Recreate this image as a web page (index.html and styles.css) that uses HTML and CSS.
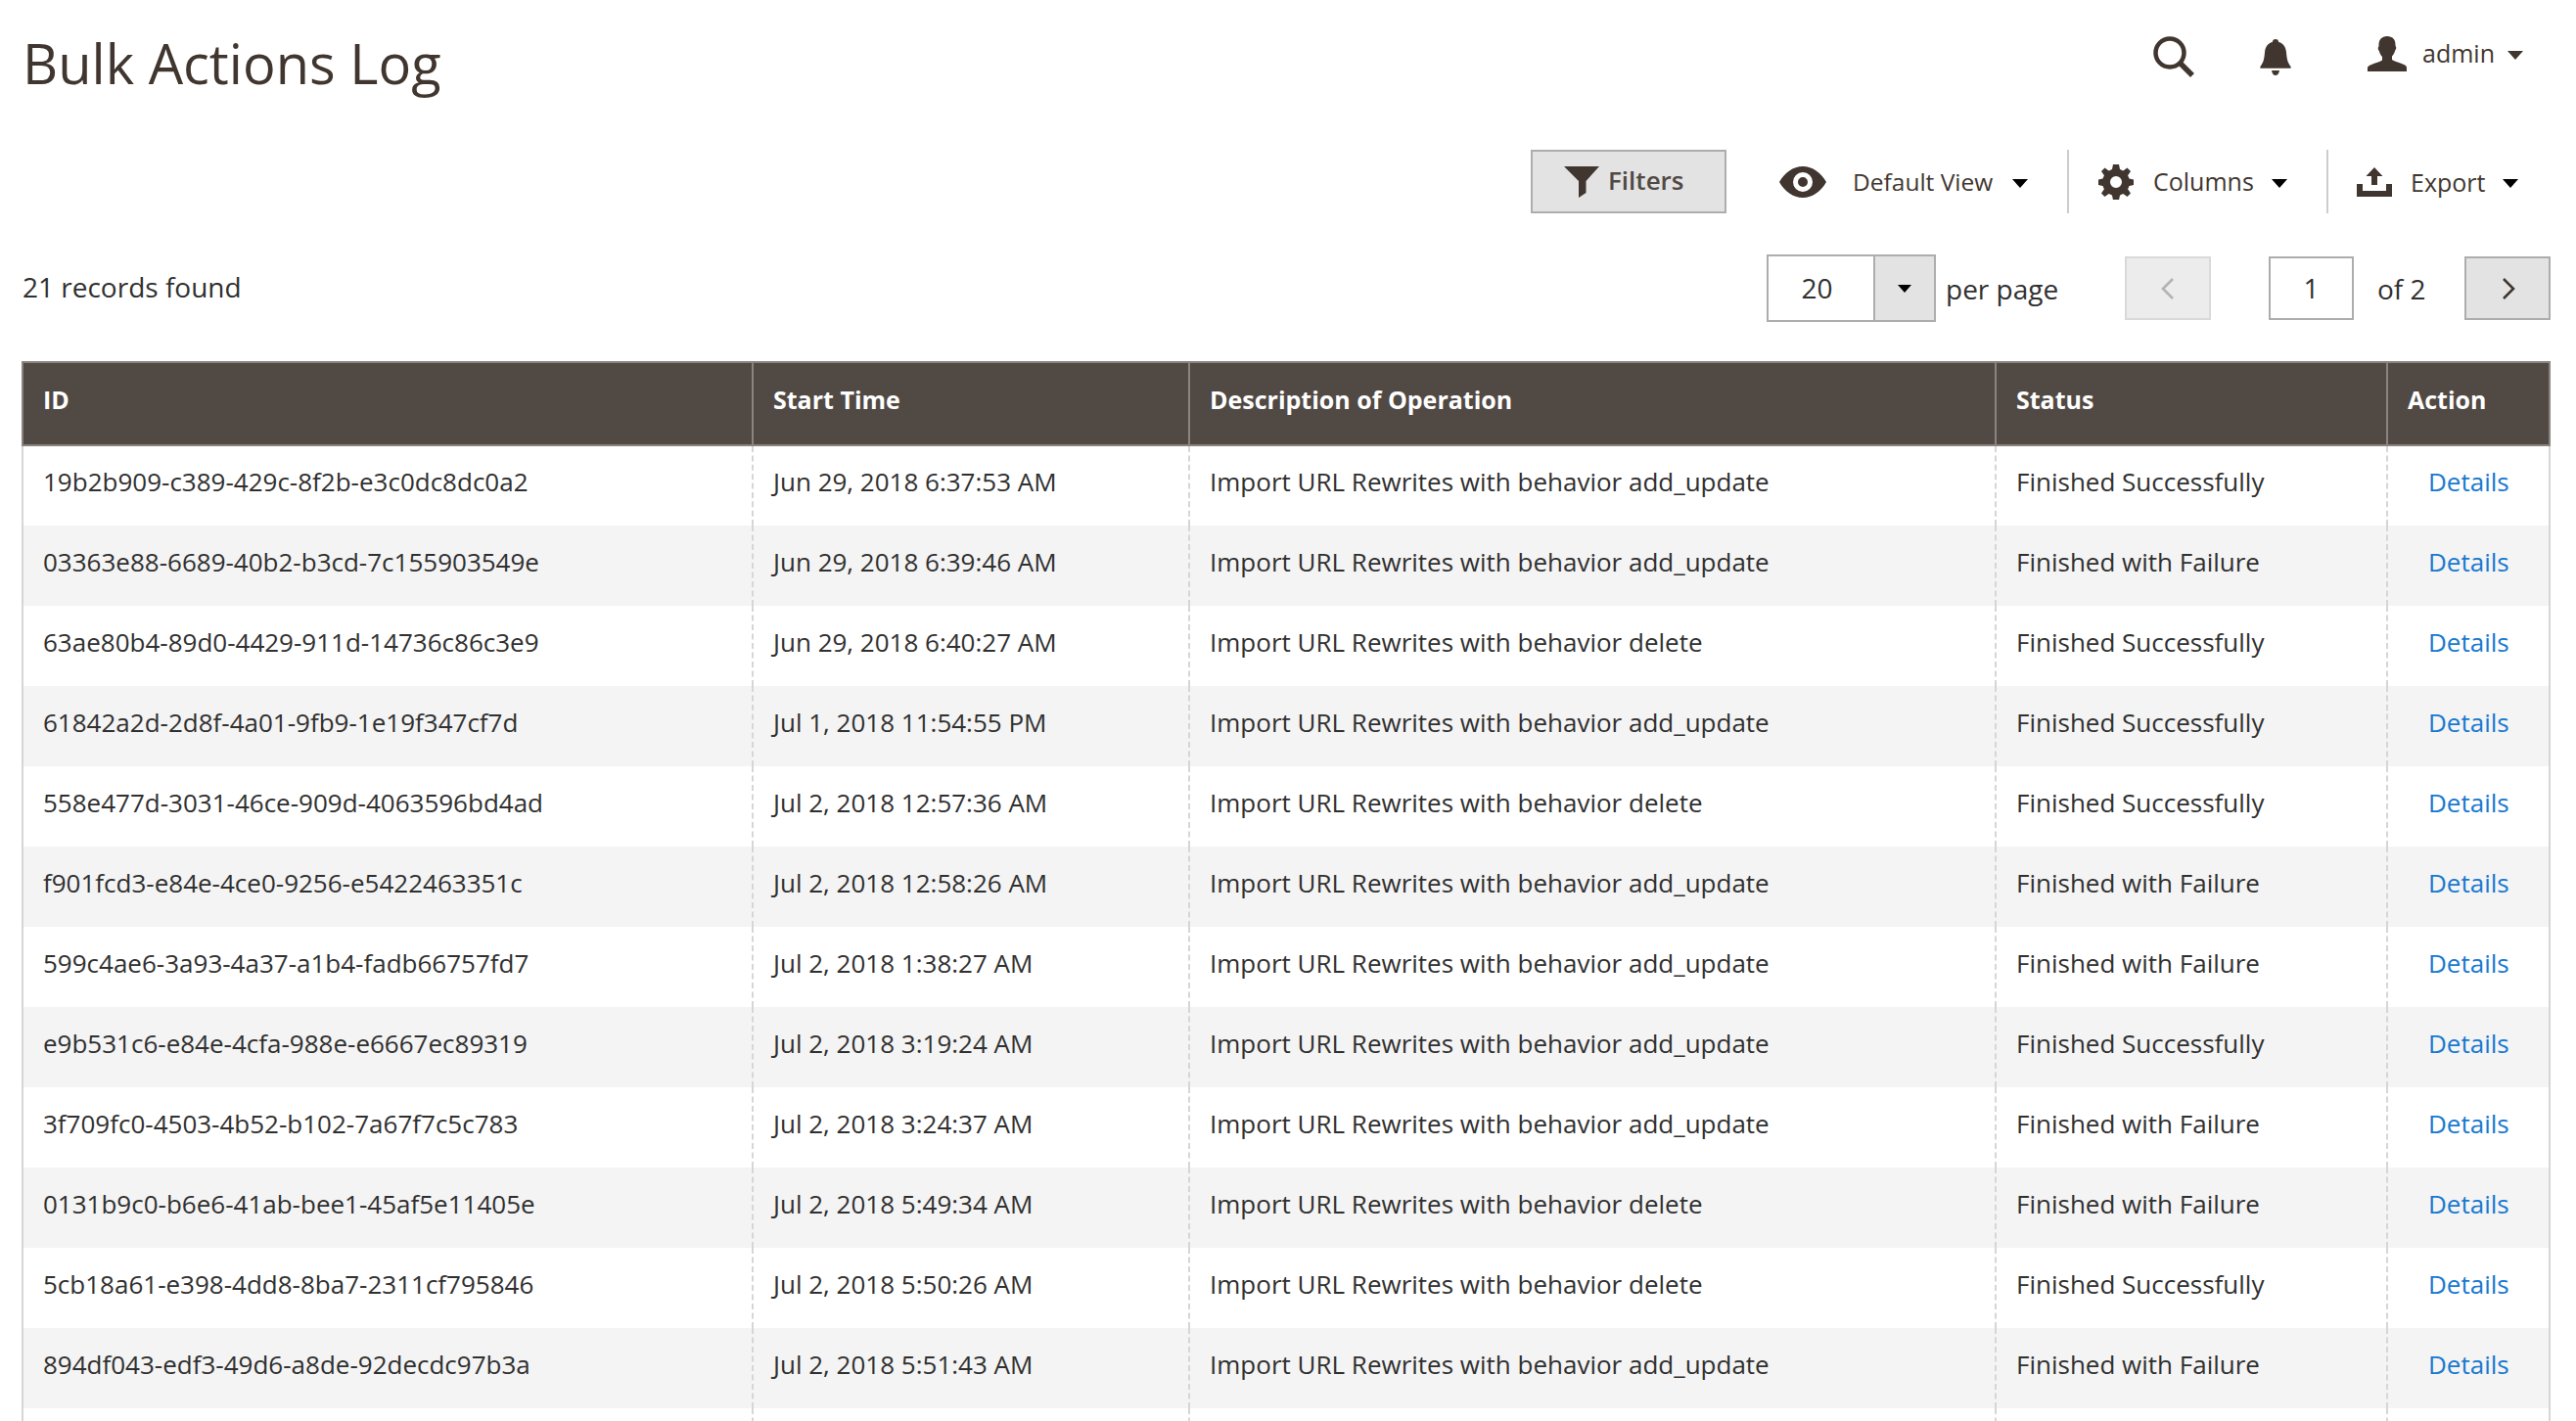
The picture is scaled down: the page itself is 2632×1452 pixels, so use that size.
FILE: index.html
```html
<!DOCTYPE html>
<html lang="en">
<head>
  <meta charset="UTF-8" />
  <title>Bulk Actions Log</title>
  <link rel="stylesheet" href="styles.css">
</head>
<body>

  <header class="top">
    <h1>Bulk Actions Log</h1>
    <div class="top-actions">
      <svg class="ico-search" viewBox="0 0 44 42"><circle cx="18" cy="17" r="14.5" fill="none" stroke="#41362f" stroke-width="4.5"/><path d="M28 27l13 13" stroke="#41362f" stroke-width="5.5" fill="none"/></svg>
      <svg class="ico-bell" viewBox="0 0 32 38"><path fill="#41362f" d="M16 0c2 0 3 1.300 3.200 3 5 1.300 7.300 5.300 7.800 10.500.5 5.500 1 10 4.500 14.500.6.800.2 1.800-.9 1.800H1.400c-1.100 0-1.500-1-.9-1.800C4 23.500 4.500 19 5 13.500 5.500 8.300 7.800 4.300 12.800 3 13 1.300 14 0 16 0zM12 32h8c-.4 3-2 5-4 5s-3.600-2-4-5z"/></svg>
      <svg class="ico-user" viewBox="0 0 40 36"><path fill="#41362f" d="M20 0c5.500 0 8.500 3.500 8.500 8.500 0 1 .1 2 .6 2.500.5.700-.1 2.600-.9 3.500-.7 3-2.200 5-3.200 6v3.500c2.500 1.700 7 2.800 11 4.500 2.500 1 4 1.900 4 3.500V36H0v-3.500c0-1.600 1.500-2.500 4-3.500 4-1.700 8.500-2.800 11-4.500V21c-1-1-2.500-3-3.200-6-.8-.9-1.400-2.800-.9-3.500.5-.5.600-1.500.6-2.500C11.500 3.500 14.500 0 20 0z"/></svg>
      <span class="admin">admin</span>
      <span class="caret caret-brown"></span>
    </div>
  </header>

  <div class="toolbar">
    <button class="btn-filters">
      <svg class="ico-filter" viewBox="0 0 36 32"><path fill="#41362f" d="M0 0h36L22.500 15v12L15 32V15z"/></svg>
      Filters
    </button>
    <div class="tool tool-view">
      <svg class="ico-eye" viewBox="0 0 48 32"><path fill="#41362f" fill-rule="evenodd" d="M24 0c10 0 18.500 6.500 24 16-5.500 9.500-14 16-24 16S5.500 25.500 0 16C5.500 6.500 14 0 24 0zm0 6a10 10 0 1 0 0 20 10 10 0 0 0 0-20zm0 5a5 5 0 1 1 0 10 5 5 0 0 1 0-10z"/></svg>
      <span class="view-label">Default View</span>
      <span class="caret"></span>
    </div>
    <div class="tool tool-columns">
      <svg class="ico-gear" viewBox="0 0 36 36"><path fill="#41362f" fill-rule="evenodd" d="M15 0h6l1 5 3.300 1.400L29.500 3.500l3.500 3.500-2.900 4.200L31.500 14.500l4.500 1v5.500l-4.500 1-1.400 3.300 2.900 4.200-3.500 3.500-4.200-2.900-3.300 1.400-1 5h-6l-1-5-3.300-1.400-4.200 2.900L3 29.500l2.900-4.200L4.500 22 0 21v-5.500l4.500-1 1.400-3.300L3 7l3.500-3.500 4.200 2.900L14 5zm3 12a6 6 0 1 0 0 12 6 6 0 0 0 0-12z"/></svg>
      <span class="columns-label">Columns</span>
      <span class="caret"></span>
    </div>
    <div class="tool tool-export">
      <svg class="ico-export" viewBox="0 0 36 30"><path fill="#41362f" d="M18 0l8.500 9H21v9h-6V9H9.500zM0 17h6v7h24v-7h6v13H0z"/></svg>
      <span class="export-label">Export</span>
      <span class="caret"></span>
    </div>
  </div>

  <div class="pager-row">
    <div class="records">21 records found</div>
    <div class="pager">
      <div class="per-select">
        <span class="per-value">20</span>
        <span class="per-toggle"><span class="caret caret-small"></span></span>
      </div>
      <span class="per-label">per page</span>
      <button class="page-btn page-prev">
        <svg viewBox="0 0 16 26"><path d="M13 3L3 13l10 10" fill="none" stroke="#b3b3b3" stroke-width="2.600"/></svg>
      </button>
      <span class="page-input">1</span>
      <span class="page-of">of 2</span>
      <button class="page-btn page-next">
        <svg viewBox="0 0 16 26"><path d="M3 3l10 10L3 23" fill="none" stroke="#41362f" stroke-width="2.600"/></svg>
      </button>
    </div>
  </div>

  <table class="grid">
    <colgroup>
      <col class="c-id"><col class="c-time"><col class="c-desc"><col class="c-status"><col class="c-action">
    </colgroup>
    <thead>
      <tr><th>ID</th><th>Start Time</th><th>Description of Operation</th><th>Status</th><th>Action</th></tr>
    </thead>
    <tbody>
      <tr><td>19b2b909-c389-429c-8f2b-e3c0dc8dc0a2</td><td>Jun 29, 2018 6:37:53 AM</td><td>Import URL Rewrites with behavior add_update</td><td>Finished Successfully</td><td class="act"><a href="#">Details</a></td></tr>
      <tr><td>03363e88-6689-40b2-b3cd-7c155903549e</td><td>Jun 29, 2018 6:39:46 AM</td><td>Import URL Rewrites with behavior add_update</td><td>Finished with Failure</td><td class="act"><a href="#">Details</a></td></tr>
      <tr><td>63ae80b4-89d0-4429-911d-14736c86c3e9</td><td>Jun 29, 2018 6:40:27 AM</td><td>Import URL Rewrites with behavior delete</td><td>Finished Successfully</td><td class="act"><a href="#">Details</a></td></tr>
      <tr><td>61842a2d-2d8f-4a01-9fb9-1e19f347cf7d</td><td>Jul 1, 2018 11:54:55 PM</td><td>Import URL Rewrites with behavior add_update</td><td>Finished Successfully</td><td class="act"><a href="#">Details</a></td></tr>
      <tr><td>558e477d-3031-46ce-909d-4063596bd4ad</td><td>Jul 2, 2018 12:57:36 AM</td><td>Import URL Rewrites with behavior delete</td><td>Finished Successfully</td><td class="act"><a href="#">Details</a></td></tr>
      <tr><td>f901fcd3-e84e-4ce0-9256-e5422463351c</td><td>Jul 2, 2018 12:58:26 AM</td><td>Import URL Rewrites with behavior add_update</td><td>Finished with Failure</td><td class="act"><a href="#">Details</a></td></tr>
      <tr><td>599c4ae6-3a93-4a37-a1b4-fadb66757fd7</td><td>Jul 2, 2018 1:38:27 AM</td><td>Import URL Rewrites with behavior add_update</td><td>Finished with Failure</td><td class="act"><a href="#">Details</a></td></tr>
      <tr><td>e9b531c6-e84e-4cfa-988e-e6667ec89319</td><td>Jul 2, 2018 3:19:24 AM</td><td>Import URL Rewrites with behavior add_update</td><td>Finished Successfully</td><td class="act"><a href="#">Details</a></td></tr>
      <tr><td>3f709fc0-4503-4b52-b102-7a67f7c5c783</td><td>Jul 2, 2018 3:24:37 AM</td><td>Import URL Rewrites with behavior add_update</td><td>Finished with Failure</td><td class="act"><a href="#">Details</a></td></tr>
      <tr><td>0131b9c0-b6e6-41ab-bee1-45af5e11405e</td><td>Jul 2, 2018 5:49:34 AM</td><td>Import URL Rewrites with behavior delete</td><td>Finished with Failure</td><td class="act"><a href="#">Details</a></td></tr>
      <tr><td>5cb18a61-e398-4dd8-8ba7-2311cf795846</td><td>Jul 2, 2018 5:50:26 AM</td><td>Import URL Rewrites with behavior delete</td><td>Finished Successfully</td><td class="act"><a href="#">Details</a></td></tr>
      <tr><td>894df043-edf3-49d6-a8de-92decdc97b3a</td><td>Jul 2, 2018 5:51:43 AM</td><td>Import URL Rewrites with behavior add_update</td><td>Finished with Failure</td><td class="act"><a href="#">Details</a></td></tr>
      <tr><td></td><td></td><td></td><td></td><td class="act"></td></tr>
    </tbody>
  </table>

</body>
</html>
```

FILE: styles.css
```css
html, body {
  height: 1452px;
  overflow: hidden;
}

body {
  margin: 0;
  padding: 0 26px 0 22px;
  font-family: "Open Sans", sans-serif;
  font-size: 26px;
  color: #303030;
  background: #fff;
}

svg {
  display: block;
  flex: none;
}

/* top bar */
.top {
  display: flex;
  justify-content: space-between;
  height: 153px;
}

h1 {
  margin: 25px 0 0 1px;
  font-size: 56px;
  font-weight: 400;
  line-height: 78px;
  color: #41362f;
}

.top-actions {
  display: flex;
  align-items: flex-start;
  padding-top: 37px;
  padding-right: 28px;
  font-size: 25px;
}

.ico-search { width: 44px; height: 42px; margin-right: 3px; }
.ico-bell { width: 32px; height: 38px; margin: 3px 0 0 63px; }
.ico-user { width: 40px; height: 36px; margin-left: 78px; }

.admin {
  margin-left: 16px;
  line-height: 34px;
  color: #41362f;
}

.caret {
  display: inline-block;
  width: 0;
  height: 0;
  border-left: 8px solid transparent;
  border-right: 8px solid transparent;
  border-top: 9px solid #000;
}

.caret-brown {
  border-top-color: #41362f;
  margin: 15px 0 0 13px;
}

/* filters, view, columns, export */
.toolbar {
  display: flex;
  justify-content: flex-end;
  height: 107px;
  font-size: 25px;
}

.btn-filters {
  display: flex;
  align-items: center;
  width: 200px;
  height: 65px;
  padding: 0 0 4px 34px;
  border: 2px solid #adadad;
  background: #e3e3e3;
  font-family: inherit;
  font-size: 26px;
  font-weight: 600;
  color: #514943;
}

.ico-filter { width: 36px; height: 32px; margin: 4px 9px 0 -2px; }

.tool {
  display: flex;
  align-items: center;
  height: 65px;
  color: #41362f;
}

.tool-view { margin-left: 54px; width: 294px; }
.tool-columns, .tool-export { border-left: 2px solid #cccccc; }
.tool-columns { width: 265px; padding-left: 30px; box-sizing: border-box; }
.tool-export { width: 229px; padding-left: 29px; box-sizing: border-box; }

.ico-eye { width: 48px; height: 32px; }
.ico-gear { width: 36px; height: 36px; }
.ico-export { width: 36px; height: 30px; }

.view-label { margin-left: 27px; font-size: 24.500px; }
.columns-label { margin-left: 20px; margin-bottom: 2px; }
.export-label { margin-left: 19px; }
.tool .caret { margin: 3px 0 0 18px; }
.tool-view .caret { margin-left: 20px; }

/* records and pager */
.pager-row {
  display: flex;
  justify-content: space-between;
  align-items: flex-start;
  height: 109px;
  font-size: 28px;
}

.records {
  margin-left: 1px;
  line-height: 66px;
}

.pager {
  display: flex;
  align-items: center;
  height: 69px;
}

.per-select {
  display: flex;
  width: 173px;
  height: 69px;
  box-sizing: border-box;
  border: 2px solid #adadad;
}

.per-value {
  width: 107px;
  box-sizing: border-box;
  padding-right: 8px;
  text-align: center;
  line-height: 65px;
}

.per-toggle {
  display: flex;
  flex: 1;
  align-items: center;
  justify-content: center;
  background: #e3e3e3;
  border-left: 2px solid #adadad;
}

.caret-small {
  border-left-width: 7px;
  border-right-width: 7px;
  border-top-width: 8px;
}

.per-label { margin-left: 10px; width: 183px; }

.page-btn {
  display: flex;
  align-items: center;
  justify-content: center;
  width: 88px;
  height: 65px;
  padding: 0;
  box-sizing: border-box;
  border: 2px solid #adadad;
  background: #e3e3e3;
}

.page-btn svg { width: 16px; height: 26px; }

.page-prev {
  border-color: #d9d9d9;
  background: #ececec;
}

.page-next svg { margin-left: 2px; }

.page-input {
  width: 87px;
  height: 65px;
  margin-left: 59px;
  box-sizing: border-box;
  border: 2px solid #adadad;
  text-align: center;
  line-height: 61px;
}

.page-of { margin-left: 24px; width: 89px; }

/* grid */
.grid {
  width: 100%;
  table-layout: fixed;
  border-collapse: collapse;
}

.c-id { width: 746px; }
.c-time { width: 446px; }
.c-desc { width: 824px; }
.c-status { width: 400px; }

.grid th {
  height: 85px;
  padding: 0 20px 10px;
  box-sizing: border-box;
  background: #514943;
  border: 2px solid #8a837f;
  color: #fff;
  font-size: 25px;
  font-weight: 700;
  text-align: left;
}

.grid td {
  height: 82px;
  padding: 0 20px 9px;
  box-sizing: border-box;
  border-left: 2px dashed #d6d6d6;
  border-right: 2px dashed #d6d6d6;
  white-space: nowrap;
}

.grid td:first-child { border-left: 2px solid #d6d6d6; }
.grid td:last-child { border-right: 2px solid #d6d6d6; }

.grid tbody tr:nth-child(even) td { background: #f4f4f4; }

.act { padding-left: 41px !important; }

.act a {
  color: #1979d0;
  text-decoration: none;
}
```
